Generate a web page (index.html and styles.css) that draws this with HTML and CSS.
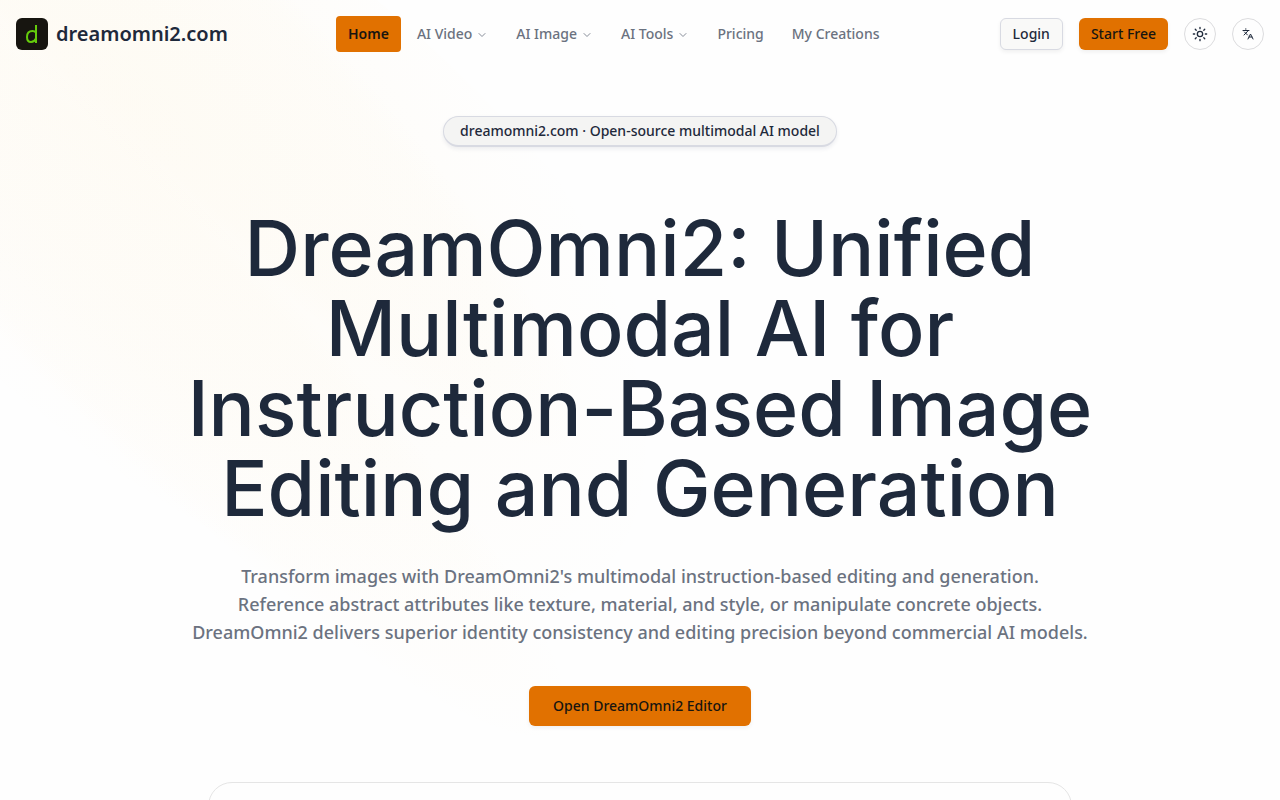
FILE: index.html
```html
<!DOCTYPE html>
<html lang="en">
<head>
    <meta charset="UTF-8">
    <meta name="viewport" content="width=device-width, initial-scale=1.0">
    <title>DreamOmni2</title>
    <link rel="stylesheet" href="styles.css">
</head>
<body>
    <div class="glow" aria-hidden="true">
        <div class="beam beam-wide"></div>
        <div class="beam beam-offset"></div>
        <div class="beam beam-narrow"></div>
    </div>

    <header class="header">
        <a class="brand" href="#">
            <svg class="logo" width="32" height="32" viewBox="0 0 32 32" fill="none" aria-hidden="true">
                <rect width="32" height="32" rx="6" fill="#171510"/>
                <path d="M20 7v18" stroke="#65cc0c" stroke-width="2"/>
                <path d="M20 14.500c-1-1.100-2-1.500-3.500-1.500-3.800 0-5.500 2.500-5.500 6 0 3.500 1.300 5 4 5 2.500 0 4-1.300 5-3.500" stroke="#65cc0c" stroke-width="2"/>
            </svg>
            <span>dreamomni2.com</span>
        </a>
        <nav class="nav">
            <a class="nav-link active" href="#">Home</a>
            <button class="nav-link" type="button">AI Video
                <svg class="chevron" viewBox="0 0 24 24" aria-hidden="true"><path d="m6 11 6 6 6-6"/></svg>
            </button>
            <button class="nav-link" type="button">AI Image
                <svg class="chevron" viewBox="0 0 24 24" aria-hidden="true"><path d="m6 11 6 6 6-6"/></svg>
            </button>
            <button class="nav-link" type="button">AI Tools
                <svg class="chevron" viewBox="0 0 24 24" aria-hidden="true"><path d="m6 11 6 6 6-6"/></svg>
            </button>
            <a class="nav-link" href="#">Pricing</a>
            <a class="nav-link" href="#">My Creations</a>
        </nav>
        <div class="actions">
            <a class="btn btn-outline" href="#">Login</a>
            <a class="btn btn-primary" href="#">Start Free</a>
            <button class="icon-btn" type="button" aria-label="Toggle theme">
                <svg class="icon-sun" viewBox="0 0 24 24" aria-hidden="true">
                    <circle cx="12" cy="12" r="4"/>
                    <path d="M12 2v2M12 20v2M2 12h2M20 12h2M4.900 4.900l1.400 1.400M17.700 17.700l1.400 1.400M4.900 19.100l1.400-1.400M17.700 6.300l1.400-1.400"/>
                </svg>
            </button>
            <button class="icon-btn" type="button" aria-label="Language">
                <svg class="icon-lang" viewBox="0 0 24 24" aria-hidden="true">
                    <path d="m5 8 6 6M4 14l6-6 2-3M2 5h12M7 2h1M22 22l-5-10-5 10M14 18h6"/>
                </svg>
            </button>
        </div>
    </header>

    <main class="hero">
        <a class="badge" href="#">dreamomni2.com · Open-source multimodal AI model</a>
        <h1>DreamOmni2: Unified Multimodal AI for Instruction-Based Image Editing and Generation</h1>
        <p class="lead">
            Transform images with DreamOmni2's multimodal instruction-based editing and generation.<br>
            Reference abstract attributes like texture, material, and style, or manipulate concrete objects.<br>
            DreamOmni2 delivers superior identity consistency and editing precision beyond commercial AI models.
        </p>
        <a class="btn btn-primary btn-large" href="#">Open DreamOmni2 Editor</a>
        <section class="editor"></section>
    </main>
</body>
</html>
```
FILE: styles.css
```css
* {
    box-sizing: border-box;
}

body {
    position: relative;
    margin: 0;
    min-height: 100vh;
    overflow-x: hidden;
    font-family: "Noto Sans", sans-serif;
    font-size: 14px;
    line-height: 20px;
    font-weight: 500;
    color: #1e293b;
    background-color: #fefefe;
}

a {
    color: inherit;
    text-decoration: none;
}

button {
    font: inherit;
    color: inherit;
    cursor: pointer;
}

/* soft beams behind the page */
.glow {
    position: absolute;
    inset: 0;
    z-index: -1;
    overflow: hidden;
}

.beam {
    position: absolute;
    top: 0;
    left: 0;
    width: 240px;
    height: 1280px;
    border-radius: 50%;
}

.beam-wide {
    width: 560px;
    transform: translateY(-350px) rotate(-45deg);
    background: radial-gradient(68% 68% at 55% 31%, rgba(255, 210, 100, 0.05) 0, rgba(250, 190, 70, 0.02) 50%, rgba(250, 190, 70, 0) 80%);
}

.beam-offset {
    transform: translate(5%, -50%) rotate(-45deg);
    background: radial-gradient(50% 50% at 50% 50%, rgba(255, 210, 100, 0.02) 0, rgba(250, 190, 70, 0.01) 80%, transparent 100%);
}

.beam-narrow {
    transform: translateY(-350px) rotate(-45deg);
    background: radial-gradient(50% 50% at 50% 50%, rgba(255, 210, 100, 0.02) 0, rgba(250, 190, 70, 0.01) 80%, transparent 100%);
}

.header {
    display: flex;
    align-items: center;
    justify-content: space-between;
    padding: 16px;
}

.brand {
    display: flex;
    align-items: center;
    gap: 8px;
    font-size: 20px;
    line-height: 28px;
    font-weight: 600;
}

.nav {
    display: flex;
    align-items: center;
    gap: 4px;
}

.nav-link {
    display: flex;
    align-items: center;
    gap: 4px;
    padding: 8px 12px;
    border: none;
    border-radius: 4px;
    background: none;
    color: #6b7280;
}

.nav-link.active {
    background-color: #e17100;
    color: #171510;
    font-weight: 600;
}

svg {
    flex-shrink: 0;
}

.chevron,
.icon-sun,
.icon-lang {
    fill: none;
    stroke: currentColor;
    stroke-width: 2;
    stroke-linecap: round;
    stroke-linejoin: round;
}

.chevron {
    width: 12px;
    height: 12px;
    opacity: 0.8;
}

.actions {
    display: flex;
    align-items: center;
    gap: 16px;
}

.btn {
    display: inline-flex;
    align-items: center;
    justify-content: center;
    height: 32px;
    padding: 0 12px;
    border-radius: 6px;
    box-shadow: 0 2px 4px rgba(0, 0, 0, 0.06);
}

.btn-outline {
    border: 1px solid #d8dae2;
    background-color: #f9f9f8;
}

.btn-primary {
    background-color: #e17100;
    color: #171510;
}

.btn-large {
    height: 40px;
    padding: 0 24px;
}

.icon-btn {
    display: flex;
    align-items: center;
    justify-content: center;
    width: 32px;
    height: 32px;
    padding: 0;
    border: 1px solid #dcdcde;
    border-radius: 50%;
    background-color: #fefefe;
}

.icon-sun {
    width: 16px;
    height: 16px;
}

.icon-lang {
    width: 12px;
    height: 12px;
}

.hero {
    display: flex;
    flex-direction: column;
    align-items: center;
    padding: 48px 24px 0;
    text-align: center;
}

.badge {
    padding: 4px 16px;
    border: 1px solid #d8dae2;
    border-bottom-width: 2px;
    border-radius: 16px;
    background-color: #f4f4f3;
    box-shadow: 0 2px 4px rgba(30, 41, 80, 0.08);
}

h1 {
    max-width: 1024px;
    margin: 61px 0 34px;
    font-family: Inter, sans-serif;
    font-size: 77px;
    line-height: 80px;
    font-weight: 500;
}

.lead {
    max-width: 900px;
    margin: 0 0 40px;
    font-size: 18px;
    line-height: 28px;
    color: #6b7280;
}

.editor {
    width: 100%;
    max-width: 864px;
    height: 480px;
    margin-top: 56px;
    border: 1px solid #e5e5e5;
    border-radius: 24px;
    background-color: #fefefe;
}
```
